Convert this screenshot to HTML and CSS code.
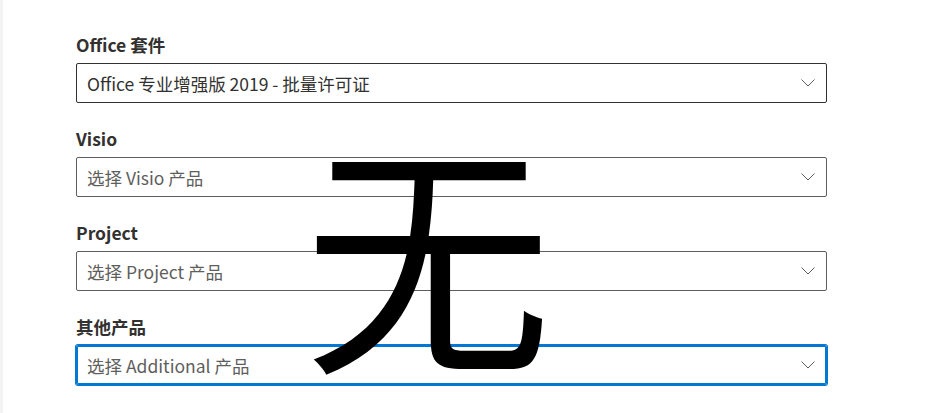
FILE: index.html
```html
<!DOCTYPE html>
<html lang="zh-CN">
<head>
<meta charset="utf-8">
<title>Office 配置</title>
<link rel="stylesheet" href="styles.css">
</head>
<body>
<div class="page">
  <div class="rail"></div>
  <main class="content">
    <form class="form">
      <div class="field">
        <label class="label">Office 套件</label>
        <div class="dropdown">
          <span class="value">Office 专业增强版 2019 - 批量许可证</span>
          <svg class="chev" width="14" height="8" viewBox="0 0 14 8"><path d="M0.5 0.5 L7 7 L13.5 0.5" fill="none" stroke="#605e5c" stroke-width="1"/></svg>
        </div>
      </div>
      <div class="field">
        <label class="label">Visio</label>
        <div class="dropdown muted">
          <span class="value placeholder">选择 Visio 产品</span>
          <svg class="chev" width="14" height="8" viewBox="0 0 14 8"><path d="M0.5 0.5 L7 7 L13.5 0.5" fill="none" stroke="#605e5c" stroke-width="1"/></svg>
        </div>
      </div>
      <div class="field">
        <label class="label">Project</label>
        <div class="dropdown muted">
          <span class="value placeholder">选择 Project 产品</span>
          <svg class="chev" width="14" height="8" viewBox="0 0 14 8"><path d="M0.5 0.5 L7 7 L13.5 0.5" fill="none" stroke="#605e5c" stroke-width="1"/></svg>
        </div>
      </div>
      <div class="field">
        <label class="label">其他产品</label>
        <div class="dropdown focused">
          <span class="value placeholder">选择 Additional 产品</span>
          <svg class="chev" width="14" height="8" viewBox="0 0 14 8"><path d="M0.5 0.5 L7 7 L13.5 0.5" fill="none" stroke="#605e5c" stroke-width="1"/></svg>
        </div>
      </div>
    </form>
    <div class="stamp">无</div>
  </main>
</div>
</body>
</html>
```
FILE: styles.css
```css
html, body {
  margin: 0;
  padding: 0;
  background: #ffffff;
}
.page {
  display: flex;
  min-height: 413px;
  font-family: "Noto Sans CJK SC", "Noto Sans", sans-serif;
  color: #323130;
}
.rail {
  width: 3px;
  background: #f3f3f3;
  flex: none;
}
.content {
  position: relative;
  flex: 1;
  padding: 26px 0 0 73px;
}
.form {
  width: 751px;
  display: flex;
  flex-direction: column;
  gap: 17px;
}
.field {
  display: flex;
  flex-direction: column;
}
.label {
  font-size: 17.5px;
  font-weight: 600;
  line-height: 25px;
  padding: 6px 0;
  color: #323130;
}
.dropdown {
  box-sizing: border-box;
  height: 40px;
  border: 1px solid #323130;
  border-radius: 2px;
  display: flex;
  align-items: center;
  padding: 0 10px 0 10px;
}
.dropdown.muted {
  border-color: #605e5c;
}
.dropdown.focused {
  border-color: #0078d4;
  box-shadow: 0 0 0 1px #0078d4, inset 0 0 0 1px #0078d4;
}
.value {
  flex: 1;
  font-size: 17.5px;
  line-height: 25px;
  color: #323130;
  white-space: nowrap;
}
.value.placeholder {
  color: #605e5c;
}
.chev {
  flex: none;
  margin-right: 1px;
}
.stamp {
  position: absolute;
  left: 301px;
  top: 122px;
  font-family: "Noto Sans CJK SC", sans-serif;
  font-size: 248px;
  line-height: 1;
  color: #000000;
}
```
